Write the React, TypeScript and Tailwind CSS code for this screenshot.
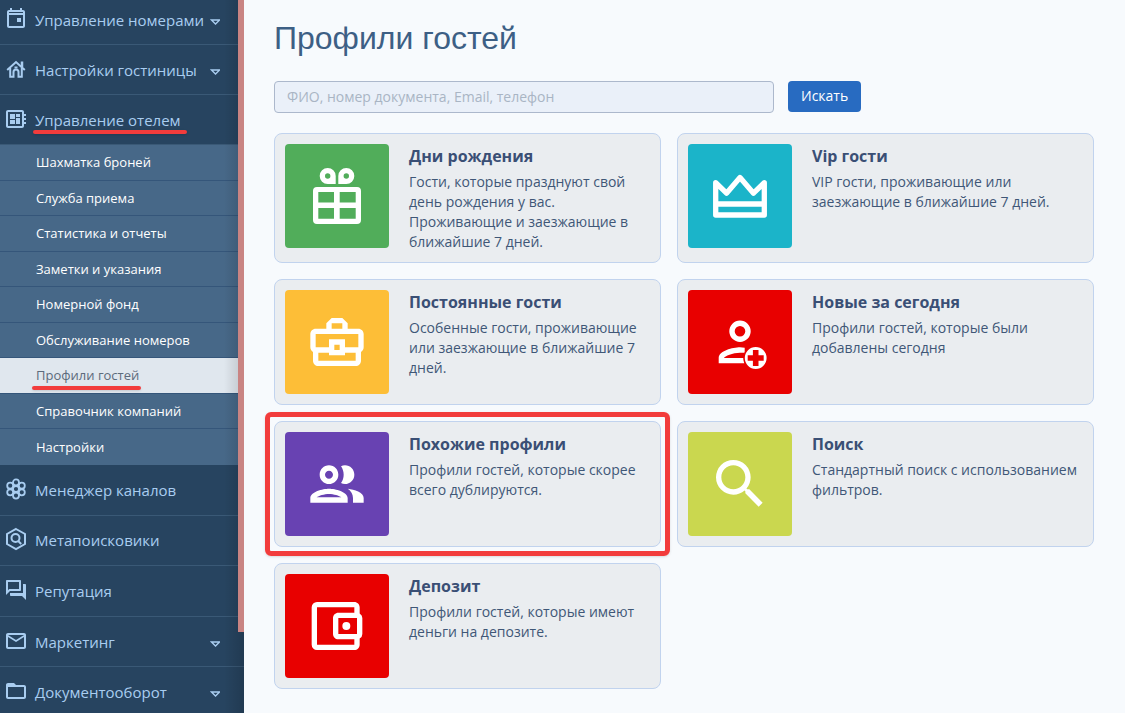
import type { ReactNode } from 'react';
import {
  MdFolderOpen,
  MdMailOutline,
  MdOutlineAccountBalanceWallet,
  MdOutlineBusinessCenter,
  MdOutlineDeveloperBoard,
  MdOutlineForum,
  MdSearch,
} from 'react-icons/md';
import clsx from 'clsx';

interface NavItemProps {
  label: string;
  icon: ReactNode;
  expandable?: boolean;
  marked?: boolean;
}

interface ProfileCardProps {
  title: string;
  text: string;
  icon: ReactNode;
  tile: string;
  highlighted?: boolean;
}

function CalendarIcon() {
  return (
    <svg viewBox="0 0 24 24" className="size-6" fill="currentColor">
      <path d="M19 3h-1V1h-2v2H8V1H6v2H5c-1.1 0-2 .9-2 2v14c0 1.1.9 2 2 2h14c1.1 0 2-.9 2-2V5c0-1.1-.9-2-2-2zm0 16H5V8h14v11zM5 6V5h14v1H5z" />
      <path d="M13 11h4v4h-4z" />
    </svg>
  );
}

function HouseIcon() {
  return (
    <svg viewBox="0 0 24 24" className="size-6" fill="none" stroke="currentColor" strokeWidth="2">
      <path d="M3.200 13 12 5l8.800 8" />
      <path d="M18 10V4.500" strokeWidth="2.500" />
      <path d="M6.200 11v8.700h3.300V15a2.500 2.500 0 0 1 5 0v4.700h3.300V11" />
      <path d="M10.500 10.500h3" />
    </svg>
  );
}

function HiveIcon() {
  const cells = [
    [12, 12],
    [12, 5.4],
    [12, 18.6],
    [6.2, 8.7],
    [17.8, 8.7],
    [6.2, 15.3],
    [17.8, 15.3],
  ];
  return (
    <svg viewBox="0 0 24 24" className="size-6" fill="none" stroke="currentColor" strokeWidth="1.8">
      {cells.map(([cx, cy]) => (
        <circle key={`${cx}-${cy}`} cx={cx} cy={cy} r="3" />
      ))}
    </svg>
  );
}

function MetaSearchIcon() {
  return (
    <svg viewBox="0 0 24 24" className="size-6" fill="none" stroke="currentColor" strokeWidth="2">
      <path d="m12 2 9 5v10l-9 5-9-5V7z" />
      <circle cx="11.5" cy="11" r="4" />
      <path d="m14.2 14 3 3" />
    </svg>
  );
}

function GiftIcon() {
  return (
    <svg viewBox="0 0 64 64" className="size-16" fill="currentColor" fillRule="evenodd">
      <path d="M12 23h40a4 4 0 0 1 4 4v29a4 4 0 0 1-4 4H12a4 4 0 0 1-4-4V27a4 4 0 0 1 4-4zM13.3 28v10.5H29V28zM34.7 28v10.5h16V28zM13.3 44v10.7H29V44zM34.7 44v10.7h16V44z" />
      <path d="M22.7 4a8 8 0 0 1 8 8v8h-8a8 8 0 0 1 0-16zm0 5.3a2.7 2.7 0 1 0 0 5.4 2.7 2.7 0 0 0 0-5.4z" />
      <path d="M41.3 4a8 8 0 0 1 0 16h-8v-8a8 8 0 0 1 8-8zm0 5.3a2.7 2.7 0 1 0 0 5.4 2.7 2.7 0 0 0 0-5.4z" />
    </svg>
  );
}

function CrownIcon() {
  return (
    <svg
      viewBox="0 0 64 64"
      className="size-16"
      fill="none"
      stroke="currentColor"
      strokeWidth="5.3"
      strokeLinejoin="round"
    >
      <path d="M7.7 51V18.7l10.8 10.5L32 13.5l13.5 15.7 10.8-10.5V51zM7.7 40h48.6" />
    </svg>
  );
}

function NewGuestIcon() {
  return (
    <svg viewBox="0 0 64 64" className="size-16" fill="currentColor">
      <circle cx="32" cy="21.3" r="8" fill="none" stroke="currentColor" strokeWidth="5.4" />
      <path
        fillRule="evenodd"
        d="M32 37.3c-7.1 0-21.3 3.6-21.3 10.7v5.3h26V37.8c-1.7-.3-3.2-.5-4.7-.5zM16 48c.6-1.9 8.8-5.3 16-5.3h5V48z"
      />
      <circle cx="47.7" cy="48" r="11.7" stroke="#e80000" strokeWidth="1.6" />
      <path d="M39.700 48h16M47.700 40v16" stroke="#e80000" strokeWidth="5.600" />
    </svg>
  );
}

function SimilarIcon() {
  return (
    <svg viewBox="0 0 24 24" className="size-16" fill="currentColor">
      <path d="M9 13.75c-2.34 0-7 1.17-7 3.5V19h14v-1.75c0-2.33-4.66-3.5-7-3.5zM4.34 17c.84-.58 2.87-1.25 4.66-1.25s3.82.67 4.66 1.25H4.34zM9 12c1.930 0 3.500-1.570 3.500-3.500S10.930 5 9 5 5.500 6.570 5.500 8.500 7.070 12 9 12zm0-5c.83 0 1.500.67 1.500 1.500S9.830 10 9 10s-1.500-.67-1.500-1.500S8.170 7 9 7z" />
      <path d="M16.040 13.810c1.160.84 1.960 1.960 1.960 3.440V19h4v-1.750c0-2.020-3.500-3.170-5.960-3.440zM15 12c1.930 0 3.500-1.570 3.500-3.500S16.930 5 15 5c-.54 0-1.040.13-1.500.35.63.89 1 1.980 1 3.150s-.37 2.260-1 3.150c.46.22.96.35 1.500.35z" />
    </svg>
  );
}

function NavItem({ label, icon, expandable, marked }: NavItemProps) {
  return (
    <li className="flex border-b border-[#3a5976]">
      <a href="#" className="flex flex-1 items-center pl-1 pr-6 text-[15px] leading-5 text-[#a9cdf0]">
        <span className="pb-0.5">{icon}</span>
        <span className="relative ml-[7px]">
          {label}
          {marked && (
            <span className="absolute -bottom-1 -left-0.5 -right-1.5 h-1 rounded-full bg-[#f23c3c] shadow-sm" />
          )}
        </span>
        {expandable && (
          <svg viewBox="0 0 10 6" className="ml-auto mt-1 h-1.5 w-2.5" fill="none" stroke="currentColor">
            <path d="M1.500 1h8L5.500 5z" strokeWidth="1.300" />
          </svg>
        )}
      </a>
    </li>
  );
}

const hotelPages = [
  'Шахматка броней',
  'Служба приема',
  'Статистика и отчеты',
  'Заметки и указания',
  'Номерной фонд',
  'Обслуживание номеров',
  'Профили гостей',
  'Справочник компаний',
  'Настройки',
];

function HotelSubmenu({ current }: { current: string }) {
  return (
    <ul className="grid h-80 auto-rows-fr bg-[#476888] text-[13px] font-medium text-white">
      {hotelPages.map((page) => (
        <li
          key={page}
          className={clsx(
            'flex border-b border-[#35567a] last:border-b-0',
            page === current && 'bg-[#e0e7ee] font-normal text-[#5d6b7c]',
          )}
        >
          <a href="#" className="flex flex-1 items-center pl-9 pt-px">
            <span className="relative">
              {page}
              {page === current && (
                <span className="absolute -bottom-1 -left-1 -right-0.5 h-1 rounded-full bg-[#f23c3c] shadow-sm" />
              )}
            </span>
          </a>
        </li>
      ))}
    </ul>
  );
}

function Sidebar() {
  return (
    <aside className="relative w-[244px] shrink-0 bg-[#274460]">
      <nav className="-mt-[5px]">
        <ul className="grid auto-rows-[50px]">
          <NavItem label="Управление номерами" icon={<CalendarIcon />} expandable />
          <NavItem label="Настройки гостиницы" icon={<HouseIcon />} expandable />
          <NavItem label="Управление отелем" icon={<MdOutlineDeveloperBoard size={24} />} marked />
        </ul>
        <HotelSubmenu current="Профили гостей" />
        <ul className="grid h-[253px] auto-rows-fr">
          <NavItem label="Менеджер каналов" icon={<HiveIcon />} />
          <NavItem label="Метапоисковики" icon={<MetaSearchIcon />} />
          <NavItem label="Репутация" icon={<MdOutlineForum size={24} />} />
          <NavItem label="Маркетинг" icon={<MdMailOutline size={24} />} expandable />
          <NavItem label="Документооборот" icon={<MdFolderOpen size={24} />} expandable />
        </ul>
      </nav>
      {/* тень у правого края и полоса прокрутки */}
      <div className="absolute inset-y-0 right-0 w-5 bg-linear-to-r from-transparent to-black/15" />
      <div className="absolute right-0 top-0 h-[632px] w-1.5 bg-[#c98483]" />
    </aside>
  );
}

function ProfileCard({ title, text, icon, tile, highlighted }: ProfileCardProps) {
  return (
    <a
      href="#"
      className="relative flex items-start gap-5 rounded-lg border border-[#c1d3ee] bg-[#eaedf0] p-2.5 text-[#3f5777]"
    >
      <div className={clsx('flex size-[104px] shrink-0 items-center justify-center rounded-sm text-white', tile)}>
        {icon}
      </div>
      <div className="flex-1">
        <h2 className="text-base font-bold text-[#3a4f75]">{title}</h2>
        <p className="mt-1 text-sm">{text}</p>
      </div>
      {highlighted && (
        <span className="absolute -inset-2.5 rounded-md border-[5px] border-[#f23c3c] shadow-sm" />
      )}
    </a>
  );
}

export default function App() {
  return (
    <div className="flex h-screen overflow-hidden bg-[#f7fafd] font-['Open_Sans',sans-serif]">
      <Sidebar />
      <main className="flex-1 pl-[30px] pr-[31px] pt-4">
        <h1 className="font-['Liberation_Sans',sans-serif] text-[32px] leading-11 text-[#3d5f85]">
          Профили гостей
        </h1>
        <form className="mt-[21px] flex gap-3.5" onSubmit={(e) => e.preventDefault()}>
          <input
            type="search"
            aria-label="Поиск гостя"
            placeholder="ФИО, номер документа, Email, телефон"
            className="h-8 w-[500px] rounded-sm border border-[#acb8cc] bg-[#eaf0f9] px-3 pb-0.5 text-sm placeholder:text-[#a9b5c4]"
          />
          <button type="submit" className="h-[31px] rounded-sm bg-[#286bc1] px-[13px] pb-0.5 text-sm font-medium text-white">
            Искать
          </button>
        </form>
        <div className="mt-5 grid grid-cols-[387fr_417fr] gap-4">
          <ProfileCard
            title="Дни рождения"
            text="Гости, которые празднуют свой день рождения у вас. Проживающие и заезжающие в ближайшие 7 дней."
            icon={<GiftIcon />}
            tile="bg-[#51ad5a]"
          />
          <ProfileCard
            title="Vip гости"
            text="VIP гости, проживающие или заезжающие в ближайшие 7 дней."
            icon={<CrownIcon />}
            tile="bg-[#1bb4c9]"
          />
          <ProfileCard
            title="Постоянные гости"
            text="Особенные гости, проживающие или заезжающие в ближайшие 7 дней."
            icon={<MdOutlineBusinessCenter size={64} />}
            tile="bg-[#fdbe37]"
          />
          <ProfileCard
            title="Новые за сегодня"
            text="Профили гостей, которые были добавлены сегодня"
            icon={<NewGuestIcon />}
            tile="bg-[#e80000]"
          />
          <ProfileCard
            title="Похожие профили"
            text="Профили гостей, которые скорее всего дублируются."
            icon={<SimilarIcon />}
            tile="bg-[#6842b2]"
            highlighted
          />
          <ProfileCard
            title="Поиск"
            text="Стандартный поиск с использованием фильтров."
            icon={<MdSearch size={64} />}
            tile="bg-[#cad74f]"
          />
          <ProfileCard
            title="Депозит"
            text="Профили гостей, которые имеют деньги на депозите."
            icon={<MdOutlineAccountBalanceWallet size={64} viewBox="0.5 0 24 24" />}
            tile="bg-[#e80000]"
          />
        </div>
      </main>
    </div>
  );
}
